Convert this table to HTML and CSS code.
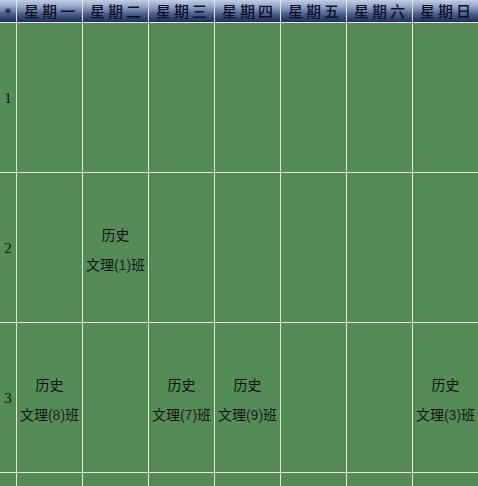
FILE: index.html
```html
<!DOCTYPE html>
<html>
<head>
<meta charset="utf-8">
<link rel="stylesheet" href="styles.css">
</head>
<body>
<div class="grid">
  <div class="hd star">*</div>
  <div class="hd">星期一</div>
  <div class="hd">星期二</div>
  <div class="hd">星期三</div>
  <div class="hd">星期四</div>
  <div class="hd">星期五</div>
  <div class="hd">星期六</div>
  <div class="hd">星期日</div>

  <div class="num">1</div>
  <div class="cell"></div><div class="cell"></div><div class="cell"></div><div class="cell"></div><div class="cell"></div><div class="cell"></div><div class="cell"></div>

  <div class="num">2</div>
  <div class="cell"></div>
  <div class="cell"><span>历史</span><span>文理<i>(1)</i>班</span></div>
  <div class="cell"></div><div class="cell"></div><div class="cell"></div><div class="cell"></div><div class="cell"></div>

  <div class="num">3</div>
  <div class="cell"><span>历史</span><span>文理<i>(8)</i>班</span></div>
  <div class="cell"></div>
  <div class="cell"><span>历史</span><span>文理<i>(7)</i>班</span></div>
  <div class="cell"><span>历史</span><span>文理<i>(9)</i>班</span></div>
  <div class="cell"></div><div class="cell"></div>
  <div class="cell"><span>历史</span><span>文理<i>(3)</i>班</span></div>

  <div class="num"></div>
  <div class="cell"></div><div class="cell"></div><div class="cell"></div><div class="cell"></div><div class="cell"></div><div class="cell"></div><div class="cell"></div>
</div>
</body>
</html>
```
FILE: styles.css
```css
html, body {
  margin: 0;
  padding: 0;
  background: #558b57;
  overflow: hidden;
}
.grid {
  display: grid;
  grid-template-columns: 16px repeat(7, 65px);
  grid-template-rows: 22px 149px 149px 149px 149px;
  gap: 1px;
  width: 478px;
  background: #e4ead6;
  font-family: "Noto Sans CJK SC", sans-serif;
}
.hd {
  background: linear-gradient(to bottom, #c2cee2 0%, #93a6c6 30%, #4d6290 62%, #1e2d55 100%);
  color: #0a1028;
  font-size: 15px;
  font-weight: 500;
  line-height: 22px;
  letter-spacing: 3px;
  padding-left: 3px;
  text-align: center;
  white-space: nowrap;
}
.star {
  letter-spacing: 0;
  padding-left: 0;
  font-family: "DejaVu Sans", sans-serif;
  font-weight: bold;
  font-size: 13px;
  line-height: 26px;
  color: #1a2038;
}
.num {
  background: #558b57;
  display: flex;
  align-items: center;
  justify-content: center;
  font-family: "Liberation Serif", serif;
  font-size: 15px;
  color: #111;
  padding-top: 2px;
}
.cell {
  background: #558b57;
  display: flex;
  flex-direction: column;
  align-items: center;
  justify-content: center;
  font-size: 14px;
  line-height: 30px;
  color: #111;
  white-space: nowrap;
  padding-top: 3px;
}
.cell i {
  font-style: normal;
  font-family: "Liberation Sans", sans-serif;
  font-size: 14px;
  color: #222;
}
```
